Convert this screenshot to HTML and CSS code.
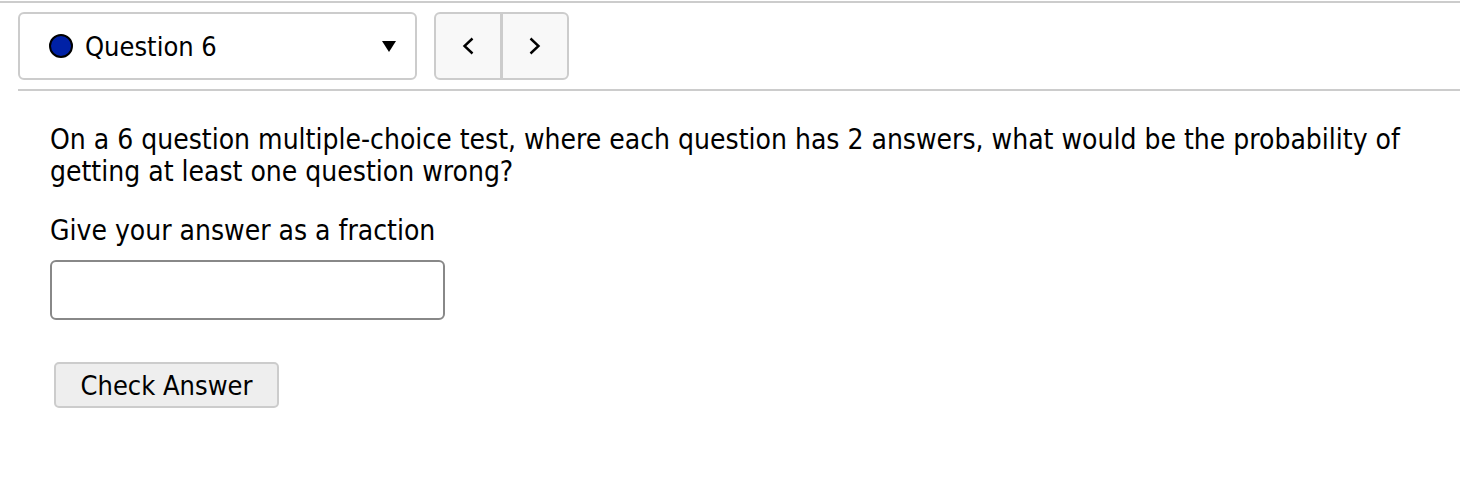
FILE: index.html
```html
<!DOCTYPE html>
<html>
<head>
<meta charset="utf-8">
<link rel="stylesheet" href="styles.css">
</head>
<body>
<div class="rule-top"></div>
<div class="header">
  <div class="qselect">
    <span class="dot"></span>
    <span class="qlabel">Question 6</span>
    <span class="caret"></span>
  </div>
  <div class="nav">
    <div class="navbtn">
      <svg width="14" height="20" viewBox="0 0 14 20"><path d="M11.5 2.5 L3.5 10 L11.5 17.5" fill="none" stroke="#000" stroke-width="2.4"/></svg>
    </div>
    <div class="navdiv"></div>
    <div class="navbtn">
      <svg width="14" height="20" viewBox="0 0 14 20"><path d="M2.5 2.5 L10.5 10 L2.5 17.5" fill="none" stroke="#000" stroke-width="2.4"/></svg>
    </div>
  </div>
</div>
<div class="content">
  <p class="question">On a 6 question multiple-choice test, where each question has 2 answers, what would be the probability of getting at least one question wrong?</p>
  <p class="prompt">Give your answer as a fraction</p>
  <input class="answer" type="text">
  <div class="actions"><button class="check">Check Answer</button></div>
</div>
</body>
</html>
```
FILE: styles.css
```css
body {
  margin: 0;
  background: #fff;
  font-family: "DejaVu Sans Condensed", "DejaVu Sans", Verdana, sans-serif;
  color: #000;
}
.rule-top {
  margin-top: 1px;
  height: 2px;
  background: #ccc;
}
.header {
  margin-left: 18px;
  padding-top: 9px;
  padding-bottom: 9px;
  border-bottom: 2px solid #ccc;
  display: flex;
  gap: 17px;
}
.qselect {
  box-sizing: border-box;
  width: 399px;
  height: 68px;
  border: 2px solid #ccc;
  border-radius: 6px;
  display: flex;
  align-items: center;
  padding-left: 29px;
  padding-right: 19px;
}
.dot {
  box-sizing: border-box;
  width: 24px;
  height: 24px;
  border-radius: 50%;
  background: #0021a6;
  border: 2px solid #000;
  margin-right: 12px;
}
.qlabel {
  font-size: 27px;
  flex: 1;
}
.caret {
  width: 0;
  height: 0;
  border-left: 7px solid transparent;
  border-right: 7px solid transparent;
  border-top: 11px solid #000;
}
.nav {
  box-sizing: border-box;
  width: 135px;
  height: 68px;
  border: 2px solid #ccc;
  border-radius: 6px;
  background: #f8f8f8;
  display: flex;
}
.navbtn {
  flex: 1;
  display: flex;
  align-items: center;
  justify-content: center;
}
.navdiv {
  width: 3px;
  background: #ccc;
}
.content {
  margin-left: 50px;
  padding-top: 33px;
}
.question {
  margin: 0;
  font-size: 28px;
  line-height: 32px;
  max-width: 1380px;
}
.prompt {
  margin: 27px 0 0;
  font-size: 28px;
  line-height: 32px;
}
.answer {
  display: block;
  box-sizing: border-box;
  margin-top: 13px;
  width: 395px;
  height: 60px;
  border: 2px solid #888;
  border-radius: 6px;
  background: #fff;
}
.actions {
  margin-top: 42px;
  padding-left: 4px;
}
.check {
  box-sizing: border-box;
  width: 225px;
  height: 46px;
  border: 2px solid #ccc;
  border-radius: 5px;
  background: #eee;
  font-family: "DejaVu Sans Condensed", "DejaVu Sans", Verdana, sans-serif;
  font-size: 27px;
  color: #000;
  padding: 0;
}
```
